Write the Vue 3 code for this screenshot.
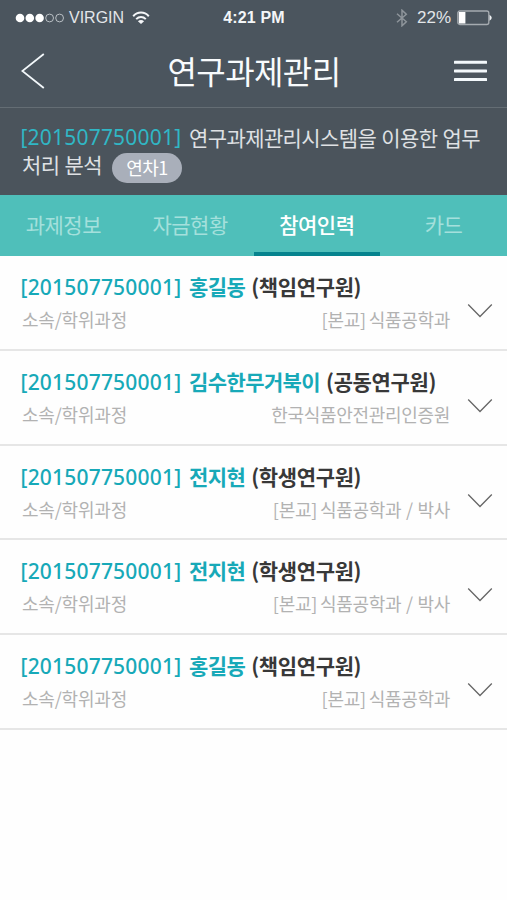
<script setup>
import { ref } from 'vue'

const tabs = ['과제정보', '자금현황', '참여인력', '카드']
const active = ref(2)
const people = [
  { name: '홍길동', role: '책임연구원', tag: '[본교]', dept: '식품공학과' },
  { name: '김수한무거북이', role: '공동연구원', tag: '', dept: '한국식품안전관리인증원' },
  { name: '전지현', role: '학생연구원', tag: '[본교]', dept: '식품공학과 / 박사' },
  { name: '전지현', role: '학생연구원', tag: '[본교]', dept: '식품공학과 / 박사' },
  { name: '홍길동', role: '책임연구원', tag: '[본교]', dept: '식품공학과' },
]
</script>

<template>
  <div class="screen">
    <header class="top">
      <div class="status">
        <div class="carrier">
          <svg class="dots" width="49" height="10" viewBox="0 0 49 10">
            <g fill="#fff"><circle cx="5" cy="5" r="4.3" /><circle cx="14.8" cy="5" r="4.3" /><circle cx="24.6" cy="5" r="4.3" /></g>
            <g fill="none" stroke="#b9bfc4" stroke-width="1"><circle cx="34.6" cy="5" r="3.9" /><circle cx="44.6" cy="5" r="3.9" /></g>
          </svg>
          <span class="network">VIRGIN</span>
          <svg class="wifi" width="18" height="14" viewBox="0 0 18 14" fill="none" stroke="#f4f6f8" stroke-width="2">
            <path d="M1.2 5.2C5.6 .4 12.4 .4 16.8 5.2M4.2 8.1C7 5.3 11 5.3 13.8 8.1" />
            <path d="M9 13 5.9 10.2Q9 7.8 12.1 10.2Z" fill="#f4f6f8" stroke="none" />
          </svg>
        </div>
        <span class="clock">4:21 PM</span>
        <div class="power">
          <svg width="12" height="18" viewBox="0 0 12 18" fill="none" stroke="#8e959b" stroke-width="1.5">
            <path d="M1 4.8 10.3 12.8 6 16.8V1.2L10.3 5.2 1 13.2" />
          </svg>
          <span class="percent">22%</span>
          <svg width="36" height="16" viewBox="0 0 36 16">
            <rect x=".8" y="1" width="31" height="13.5" rx="2" fill="none" stroke="#a5abb0" stroke-width="1.3" />
            <rect x="1.8" y="2" width="6.6" height="11.5" fill="#fff" />
            <path d="M32.5 4.8Q37 7.7 32.5 10.7Z" fill="#eef1f3" />
          </svg>
        </div>
      </div>
      <nav class="bar">
        <svg width="24" height="36" viewBox="0 0 24 36" fill="none" stroke="#f3f8fb" stroke-width="1.8">
          <path d="M22.8 1 1.3 18 22.8 35" />
        </svg>
        <h1>연구과제관리</h1>
        <svg width="33" height="22" viewBox="0 0 33 22" fill="#f3f8fb">
          <rect y=".8" width="33" height="3" rx=".6" /><rect y="9.4" width="33" height="3" rx=".6" /><rect y="18" width="33" height="3" rx=".6" />
        </svg>
      </nav>
    </header>

    <section class="subject">
      <div class="line"><span class="code">[201507750001]</span><span class="text">연구과제관리시스템을 이용한 업무</span></div>
      <div class="line second"><span class="text">처리 분석</span><span class="badge">연차1</span></div>
    </section>

    <div class="tabs">
      <button v-for="(tab, i) in tabs" :key="tab" :class="{ active: i === active }" @click="active = i">{{ tab }}</button>
    </div>

    <ul class="list">
      <li v-for="(p, i) in people" :key="i">
        <div class="info">
          <div class="head">
            <span class="code">[201507750001]</span>
            <span class="name">{{ p.name }}</span>
            <span class="role">({{ p.role }})</span>
          </div>
          <div class="detail">
            <span class="label">소속/학위과정</span>
            <span class="dept"><span v-if="p.tag" class="tag">{{ p.tag }}</span>{{ p.dept }}</span>
          </div>
        </div>
        <svg class="chevron" width="26" height="16" viewBox="0 0 26 16" fill="none" stroke="#666" stroke-width="1.3">
          <path d="M1.2 1.5 13 13.5 24.8 1.5" />
        </svg>
      </li>
    </ul>
  </div>
</template>

<style>
body {
  background: #fefefe;
}
</style>

<style scoped>
.screen {
  width: 507px;
  min-height: 900px;
  background: #fefefe;
  font-family: 'Noto Sans CJK KR', sans-serif;
  overflow: hidden;
}
.top {
  height: 108px;
  box-sizing: border-box;
  background: #4b555e;
  border-bottom: 1px solid #646d74;
}
.status {
  height: 36px;
  display: grid;
  grid-template-columns: 1fr auto 1fr;
  align-items: center;
  padding: 0 14px 0 15px;
  box-sizing: border-box;
  font-family: 'Liberation Sans', sans-serif;
  font-size: 16px;
  color: #e3e6e9;
}
.carrier,
.power {
  display: flex;
  align-items: center;
}
.network {
  margin-left: 5px;
}
.wifi {
  margin-left: 8px;
}
.clock {
  font-weight: bold;
  letter-spacing: 0.15px;
  color: #f4f6f8;
}
.power {
  justify-content: flex-end;
}
.percent {
  margin: 0 6px 0 9px;
  font-size: 17px;
}
.bar {
  height: 71px;
  display: flex;
  align-items: center;
  justify-content: space-between;
  padding: 0 20px 0 21px;
}
.bar svg {
  margin-bottom: 1px;
}
h1 {
  margin: 0;
  padding: 0 0 3px 9px;
  font-size: 32px;
  line-height: 68px;
  font-weight: 400;
  letter-spacing: -0.6px;
  color: #f8fbfd;
}
.subject {
  height: 87px;
  box-sizing: border-box;
  padding: 16px 21px 0;
  background: #4b545c;
  color: #dfe1e4;
  font-size: 21px;
  letter-spacing: -0.6px;
  word-spacing: 1px;
}
.line {
  display: flex;
  height: 27px;
  line-height: 27px;
  white-space: nowrap;
}
.code {
  font-family: 'Noto Sans', sans-serif;
  box-sizing: border-box;
  width: 168px;
  margin-left: -0.5px;
  margin-right: 0.5px;
  flex: none;
  letter-spacing: 0.2px;
}
.subject .code {
  color: #30b7c5;
}
.second {
  align-items: center;
}
.second .text {
  padding: 0 0 1px 1px;
}
.badge {
  margin: 6px 0 0 10px;
  width: 70px;
  height: 30px;
  border-radius: 15px;
  background: #a9afba;
  color: #fff;
  font-size: 18px;
  line-height: 29px;
  text-align: center;
}
.tabs {
  height: 61px;
  display: grid;
  grid-template-columns: repeat(4, 1fr);
  background: #4fbfba;
}
.tabs button {
  border: 0;
  border-bottom: 4px solid transparent;
  padding: 1px 0 0;
  background: none;
  font: 400 21px 'Noto Sans CJK KR', sans-serif;
  letter-spacing: -0.5px;
  color: #a4e0dc;
}
.tabs button.active {
  border-color: #06838e;
  color: #fff;
  font-weight: 500;
}
.list {
  margin: 0;
  padding: 0;
  list-style: none;
}
li {
  height: 94.8px;
  box-sizing: border-box;
  display: flex;
  align-items: flex-start;
  padding: 14px 14px 0 21px;
  border-bottom: 2px solid #e6e6e6;
}
.info {
  flex: 1;
}
.head {
  display: flex;
  height: 32px;
  line-height: 32px;
  font-size: 21px;
  font-weight: 500;
  letter-spacing: -0.6px;
  white-space: nowrap;
}
.head .code {
  padding-top: 1px;
}
.head .code,
.name {
  color: #17a9b8;
}
.name {
  font-weight: 700;
}
.role {
  margin-left: 6px;
  font-weight: 700;
  letter-spacing: -0.35px;
  color: #383838;
}
.detail {
  display: flex;
  justify-content: space-between;
  height: 34px;
  line-height: 34px;
  font-size: 18px;
  font-weight: 400;
  letter-spacing: -0.3px;
  word-spacing: 1px;
  color: #b2b2b2;
}
.label {
  padding-left: 1px;
  letter-spacing: -0.2px;
}
.tag {
  margin-right: 3px;
}
.chevron {
  margin: 33px 0 0 17px;
}
</style>
